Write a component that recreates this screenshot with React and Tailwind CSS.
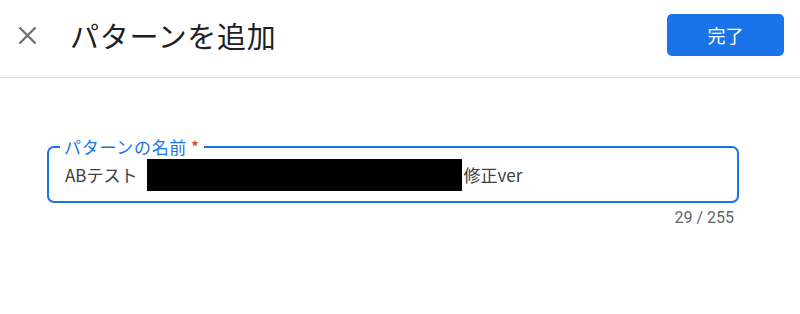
import React from "react";

export default function App() {
  return (
    <div className="w-[800px] h-[314px] bg-white font-['Noto_Sans_CJK_JP','Noto_Sans',sans-serif] overflow-hidden">
      <header className="h-[78px] border-b border-[#e0e0e0] flex items-start justify-between pt-[14px] pl-[18px] pr-[16px]">
        <div className="flex items-center h-[42px]">
          <svg width="19" height="19" viewBox="0 0 19 19" className="mt-[1px]">
            <path d="M1.5 1.5 L17.5 17.5 M17.5 1.5 L1.5 17.5" stroke="#707070" strokeWidth="2.3" strokeLinecap="butt" fill="none" />
          </svg>
          <h1 className="ml-[33px] text-[29px] tracking-[0.7px] leading-[42px] text-[#202124] font-normal">パターンを追加</h1>
        </div>
        <button className="w-[117px] h-[42px] rounded-[5px] bg-[#1a73e8] text-white text-[18px] leading-none">完了</button>
      </header>
      <div className="pt-[57px] pl-[47px] pr-[61px]">
        <fieldset className="border-2 border-[#1a73e8] rounded-[7px] h-[68px] pl-[11px] pr-[14px]">
          <legend className="px-[4px] text-[17px] tracking-[0.7px] leading-[24px] text-[#1a73e8]">
            パターンの名前<span className="text-[#d93025] ml-[4px]">*</span>
          </legend>
          <div className="flex items-center h-[32px] mt-[0px] text-[17px] text-[#3c4043]">
            <span className="ml-[5px]">ABテスト</span>
            <span className="inline-block w-[315px] h-[32px] bg-black ml-[9px]"></span>
            <span className="ml-[2px]">修正ver</span>
          </div>
        </fieldset>
        <div className="flex justify-end pr-[5px] mt-[4px] text-[16px] leading-[22px] text-[#5f6368] font-['Roboto',sans-serif]">
          29 / 255
        </div>
      </div>
    </div>
  );
}
